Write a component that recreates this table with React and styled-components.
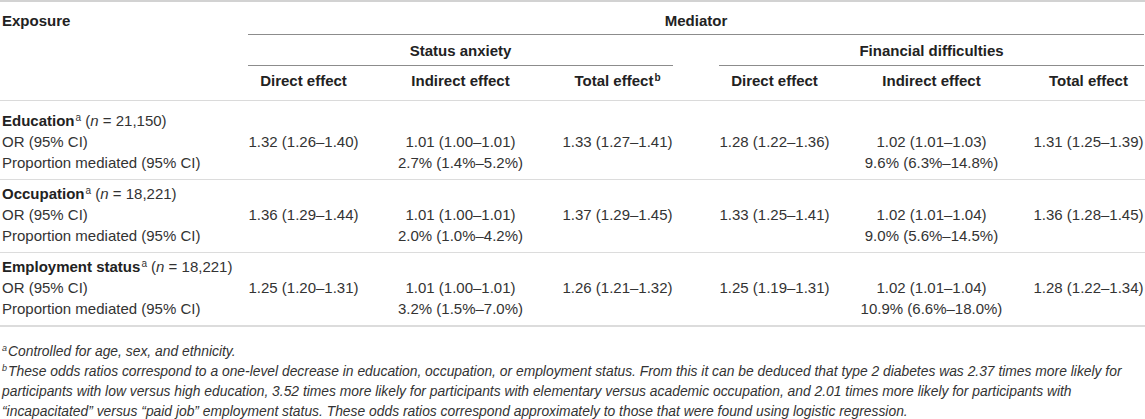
import React from "react";
import styled, { createGlobalStyle } from "styled-components";

const GlobalStyle = createGlobalStyle`
  html, body {
    margin: 0;
    padding: 0;
    background: #ffffff;
  }
  body {
    font-family: "Liberation Sans", Arial, sans-serif;
    color: #333333;
  }
`;

const COLS = "225px repeat(6, 157px)";

const groups = [
  {
    name: "Education",
    n: "21,150",
    or: [
      "1.32 (1.26–1.40)",
      "1.01 (1.00–1.01)",
      "1.33 (1.27–1.41)",
      "1.28 (1.22–1.36)",
      "1.02 (1.01–1.03)",
      "1.31 (1.25–1.39)",
    ],
    prop: ["2.7% (1.4%–5.2%)", "9.6% (6.3%–14.8%)"],
  },
  {
    name: "Occupation",
    n: "18,221",
    or: [
      "1.36 (1.29–1.44)",
      "1.01 (1.00–1.01)",
      "1.37 (1.29–1.45)",
      "1.33 (1.25–1.41)",
      "1.02 (1.01–1.04)",
      "1.36 (1.28–1.45)",
    ],
    prop: ["2.0% (1.0%–4.2%)", "9.0% (5.6%–14.5%)"],
  },
  {
    name: "Employment status",
    n: "18,221",
    or: [
      "1.25 (1.20–1.31)",
      "1.01 (1.00–1.01)",
      "1.26 (1.21–1.32)",
      "1.25 (1.19–1.31)",
      "1.02 (1.01–1.04)",
      "1.28 (1.22–1.34)",
    ],
    prop: ["3.2% (1.5%–7.0%)", "10.9% (6.6%–18.0%)"],
  },
];

const App = () => {
  return (
    <>
      <GlobalStyle />
      <Page>
        <Table>
          <Head>
            <Exposure>Exposure</Exposure>
            <GroupHead $col="2 / span 6">
              <GroupLabel $top={10} $bottom={4}>
                Mediator
              </GroupLabel>
            </GroupHead>
            <GroupHead $col="2 / span 3">
              <GroupLabel $top={7} $bottom={5}>
                Status anxiety
              </GroupLabel>
            </GroupHead>
            <GroupHead $col="5 / span 3">
              <GroupLabel $top={7} $bottom={5}>
                Financial difficulties
              </GroupLabel>
            </GroupHead>
            <SubHead>Direct effect</SubHead>
            <SubHead>Indirect effect</SubHead>
            <SubHead>
              Total effect<Sup $bold>b</Sup>
            </SubHead>
            <SubHead>Direct effect</SubHead>
            <SubHead>Indirect effect</SubHead>
            <SubHead>Total effect</SubHead>
          </Head>

          {groups.map((g, i) => (
            <Group key={g.name} $first={i === 0} $last={i === groups.length - 1}>
              <GroupTitle>
                <strong>{g.name}</strong>
                <Sup>a</Sup> (<i>n</i> = {g.n})
              </GroupTitle>
              <Row>
                <RowLabel>OR (95% CI)</RowLabel>
                {g.or.map((v, k) => (
                  <Cell key={k}>{v}</Cell>
                ))}
              </Row>
              <Row>
                <RowLabel>Proportion mediated (95% CI)</RowLabel>
                <Cell />
                <Cell>{g.prop[0]}</Cell>
                <Cell />
                <Cell />
                <Cell>{g.prop[1]}</Cell>
                <Cell />
              </Row>
            </Group>
          ))}
        </Table>

        <Notes>
          <p>
            <Sup>a</Sup>Controlled for age, sex, and ethnicity.
          </p>
          <p>
            <Sup>b</Sup>These odds ratios correspond to a one-level decrease in
            education, occupation, or employment status. From this it can be
            deduced that type 2 diabetes was 2.37 times more likely for
            <br />
            participants with low versus high education, 3.52 times more likely
            for participants with elementary versus academic occupation, and
            2.01 times more likely for participants with
            <br />
            “incapacitated” versus “paid job” employment status. These odds
            ratios correspond approximately to those that were found using
            logistic regression.
          </p>
        </Notes>
      </Page>
    </>
  );
};

export default App;

const Page = styled.div`
  width: 1145px;
  height: 419px;
  overflow: hidden;
`;

const Table = styled.div`
  width: 1168px;
  border-top: 2px solid #d2d2d2;
`;

const Head = styled.div`
  display: grid;
  grid-template-columns: ${COLS};
  border-bottom: 1px solid #dadada;
  font-size: 15px;
  font-weight: 700;
  color: #222222;
  line-height: 18px;
`;

const Exposure = styled.div`
  grid-column: 1;
  grid-row: 1 / span 3;
  padding: 10px 0 0 2px;
`;

const GroupHead = styled.div`
  grid-column: ${(p) => p.$col};
  padding: 0 23px;
`;

const GroupLabel = styled.div`
  text-align: center;
  padding: ${(p) => p.$top}px 0 ${(p) => p.$bottom}px;
  border-bottom: 1px solid #8c8c8c;
`;

const SubHead = styled.div`
  text-align: center;
  padding: 6px 0 10px;
  white-space: nowrap;
`;

const Sup = styled.sup`
  font-size: 10px;
  line-height: 0;
  font-weight: ${(p) => (p.$bold ? 700 : 400)};
  vertical-align: 5px;
  margin-left: 1px;
`;

const Group = styled.div`
  padding: ${(p) => (p.$first ? 9 : 3)}px 0 6px;
  border-bottom: ${(p) => (p.$last ? 2 : 1)}px solid #dcdcdc;
  font-size: 15px;
  line-height: 21px;

  strong {
    font-weight: 700;
    color: #222222;
  }
`;

const GroupTitle = styled.div`
  padding-left: 2px;
  white-space: nowrap;
`;

const Row = styled.div`
  display: grid;
  grid-template-columns: ${COLS};
`;

const RowLabel = styled.div`
  padding-left: 2px;
  white-space: nowrap;
`;

const Cell = styled.div`
  text-align: center;
  white-space: nowrap;
`;

const Notes = styled.div`
  margin-top: 14px;
  padding-left: 2px;
  font-size: 13.85px;
  line-height: 20px;
  font-style: italic;
  color: #333333;

  p {
    margin: 0;
    white-space: nowrap;
  }

  sup {
    font-size: 9px;
    margin-left: 0;
    margin-right: 1px;
  }
`;
